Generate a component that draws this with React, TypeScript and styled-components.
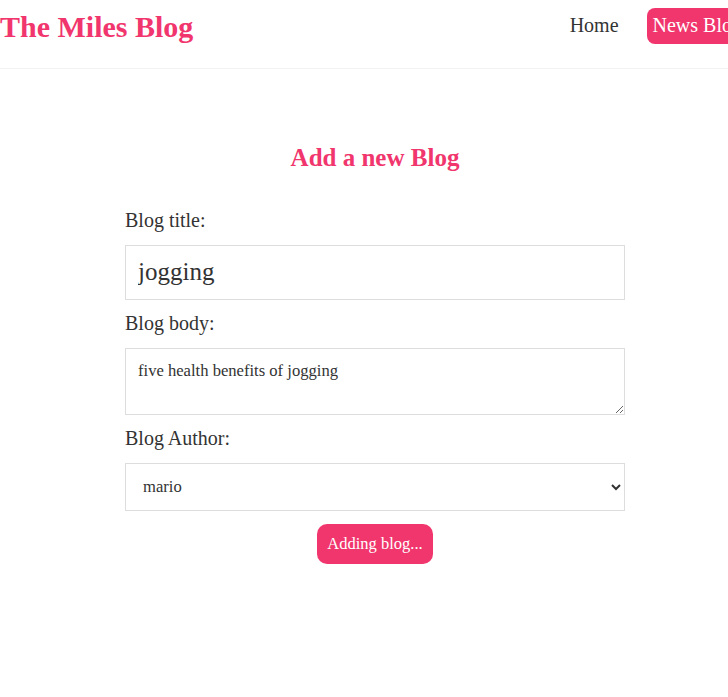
import React from "react";
import styled, { createGlobalStyle } from "styled-components";

const GlobalStyle = createGlobalStyle`
  html, body {
    margin: 0;
    padding: 0;
    background: #fff;
    overflow: hidden;
  }
  * {
    margin: 0;
    box-sizing: border-box;
    font-family: "Liberation Serif", "Times New Roman", serif;
    color: #333;
  }
`;

const Page = styled.div`
  width: 750px;
`;

const Navbar = styled.nav`
  display: flex;
  align-items: center;
  padding: 8px 2px 24px 0;
  border-bottom: 1px solid #f2f2f2;
`;

const Brand = styled.h1`
  font-size: 30px;
  font-weight: bold;
  line-height: 35px;
  color: #f1356d;
`;

const Links = styled.div`
  margin-left: auto;
  display: flex;
  align-items: center;
  gap: 22px;
`;

const NavLink = styled.a<{ $active?: boolean }>`
  font-size: 20px;
  line-height: 23px;
  padding: 6px 6px 7px;
  text-decoration: none;
  border-radius: 8px;
  color: ${(p) => (p.$active ? "#fff" : "#333")};
  background: ${(p) => (p.$active ? "#f1356d" : "transparent")};
`;

const Content = styled.main`
  padding-top: 74px;
`;

const Create = styled.div`
  max-width: 500px;
  margin: 0 auto;
  text-align: center;
`;

const Heading = styled.h2`
  font-size: 25px;
  line-height: 29px;
  font-weight: bold;
  color: #f1356d;
  margin-bottom: 37px;
`;

const Label = styled.label`
  display: block;
  text-align: left;
  font-size: 20px;
  line-height: 23px;
`;

const fieldBase = `
  display: block;
  width: 100%;
  margin: 12.5px 0;
  border: 1px solid #ddd;
  background: #fff;
  color: #333;
  outline: none;
`;

const TitleInput = styled.input`
  ${fieldBase}
  height: 55px;
  padding: 0 12px;
  font-size: 25px;
`;

const BodyArea = styled.textarea`
  ${fieldBase}
  height: 67px;
  padding: 12px 12px;
  font-size: 16.6px;
  line-height: 19px;
  resize: vertical;
`;

const AuthorSelect = styled.select`
  ${fieldBase}
  height: 48px;
  padding: 0 12px 0 13px;
  font-size: 16.6px;
`;

const SubmitButton = styled.button`
  display: block;
  margin: 13px auto 0;
  background: #f1356d;
  color: #fff;
  border: 0;
  padding: 10px 10px 11px;
  border-radius: 10px;
  font-size: 16.5px;
  line-height: 19px;
  cursor: pointer;
`;

export default function App() {
  return (
    <Page>
      <GlobalStyle />
      <Navbar>
        <Brand>The Miles Blog</Brand>
        <Links>
          <NavLink href="#">Home</NavLink>
          <NavLink href="#" $active>
            News Blog
          </NavLink>
        </Links>
      </Navbar>
      <Content>
        <Create>
          <Heading>Add a new Blog</Heading>
          <form onSubmit={(e) => e.preventDefault()}>
            <Label>Blog title:</Label>
            <TitleInput type="text" defaultValue="jogging" />
            <Label>Blog body:</Label>
            <BodyArea defaultValue="five health benefits of jogging" />
            <Label>Blog Author:</Label>
            <AuthorSelect defaultValue="mario">
              <option value="mario">mario</option>
              <option value="yoshi">yoshi</option>
            </AuthorSelect>
            <SubmitButton disabled>Adding blog...</SubmitButton>
          </form>
        </Create>
      </Content>
    </Page>
  );
}
